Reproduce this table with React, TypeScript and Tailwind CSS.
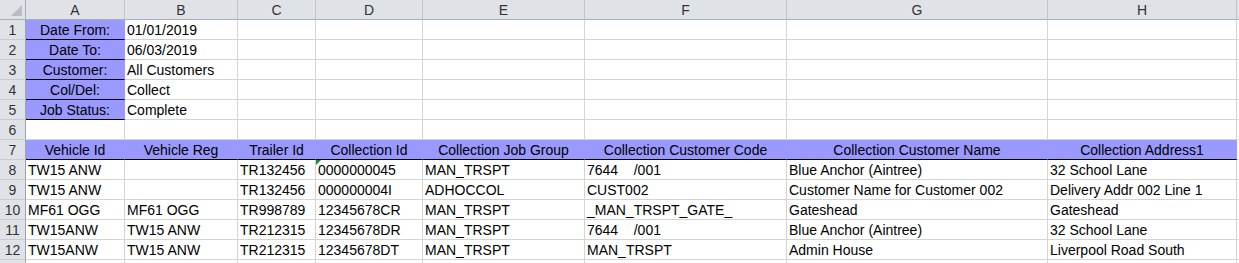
import React from 'react'

const font = { fontFamily: '"Liberation Sans", Arial, sans-serif' }

// column I is only a sliver at the right edge, so its letter is not visible
const letters = ['A', 'B', 'C', 'D', 'E', 'F', 'G', 'H', '']

const params: [string, string][] = [
  ['Date From:', '01/01/2019'],
  ['Date To:', '06/03/2019'],
  ['Customer:', 'All Customers'],
  ['Col/Del:', 'Collect'],
  ['Job Status:', 'Complete'],
]

const headings = [
  'Vehicle Id',
  'Vehicle Reg',
  'Trailer Id',
  'Collection Id',
  'Collection Job Group',
  'Collection Customer Code',
  'Collection Customer Name',
  'Collection Address1',
]

const data: string[][] = [
  ['TW15 ANW', '', 'TR132456', '0000000045', 'MAN_TRSPT', '7644    /001', 'Blue Anchor (Aintree)', '32 School Lane'],
  ['TW15 ANW', '', 'TR132456', '000000004I', 'ADHOCCOL', 'CUST002', 'Customer Name for Customer 002', 'Delivery Addr 002 Line 1'],
  ['MF61 OGG', 'MF61 OGG', 'TR998789', '12345678CR', 'MAN_TRSPT', '_MAN_TRSPT_GATE_', 'Gateshead', 'Gateshead'],
  ['TW15ANW', 'TW15 ANW', 'TR212315', '12345678DR', 'MAN_TRSPT', '7644    /001', 'Blue Anchor (Aintree)', '32 School Lane'],
  ['TW15ANW', 'TW15 ANW', 'TR212315', '12345678DT', 'MAN_TRSPT', 'MAN_TRSPT', 'Admin House', 'Liverpool Road South'],
]

function RowHead({ n }: { n?: number }) {
  return (
    <div className="h-[20px] bg-[#dfe3e8] border-r border-b border-r-[#9ea4ab] border-b-[#c6cbd1] text-center text-[14px] leading-[20px] text-[#333]">
      {n}
    </div>
  )
}

function Cell({ children }: { children?: React.ReactNode }) {
  return (
    <div className="relative h-[20px] border-r border-b border-[#d4d4d4] pl-[2px] text-[14px] leading-[20px] text-black whitespace-pre overflow-hidden">
      {children}
    </div>
  )
}

function blanks(n: number, key: string) {
  return Array.from({ length: n }, (_, i) => <Cell key={key + i} />)
}

export default function App() {
  return (
    <div className="w-[1239px] h-[263px] overflow-hidden bg-white" style={font}>
      <div className="grid grid-cols-[26px_99px_113px_78px_107px_162px_202px_261px_189px_1fr]">
        {/* select-all corner */}
        <div className="relative h-[20px] bg-[#dfe3e8] border-r border-b border-[#a8aeb5]">
          <svg className="absolute right-[3px] bottom-[3px]" width="11" height="11" viewBox="0 0 11 11">
            <polygon points="11,0 11,11 0,11" fill="#b9bec4" />
          </svg>
        </div>
        {letters.map((l, i) => (
          <div
            key={i}
            className="h-[20px] bg-[#dfe3e8] border-r border-b border-r-[#c0c5cb] border-b-[#a8aeb5] text-center text-[14px] leading-[20px] text-[#333]"
          >
            {l}
          </div>
        ))}

        {/* parameter block */}
        {params.map(([label, value], i) => (
          <React.Fragment key={label}>
            <RowHead n={i + 1} />
            <div className="h-[20px] bg-[#9999ff] border-r border-b border-r-[#9999ff] border-b-black text-center text-[14px] leading-[20px] text-black">
              {label}
            </div>
            <Cell>{value}</Cell>
            {blanks(7, 'p' + i)}
          </React.Fragment>
        ))}

        <RowHead n={6} />
        {blanks(9, 'r6')}

        {/* column headings */}
        <RowHead n={7} />
        {headings.map((h) => (
          <div
            key={h}
            className="h-[20px] bg-[#9999ff] border-r border-b border-r-[#9999ff] border-b-black text-center text-[14px] leading-[20px] text-black whitespace-nowrap overflow-hidden"
          >
            {h}
          </div>
        ))}
        <Cell />

        {data.map((row, r) => (
          <React.Fragment key={r}>
            <RowHead n={r + 8} />
            {row.map((v, c) => (
              <Cell key={c}>
                {r === 0 && c === 3 && (
                  <span className="absolute left-0 top-0 w-0 h-0 border-t-[5px] border-r-[5px] border-t-[#1e8a3a] border-r-transparent" />
                )}
                {v}
              </Cell>
            ))}
            <Cell />
          </React.Fragment>
        ))}

        {/* row 13: only its top edge is in view */}
        <RowHead />
        {blanks(9, 'r13')}
      </div>
    </div>
  )
}
